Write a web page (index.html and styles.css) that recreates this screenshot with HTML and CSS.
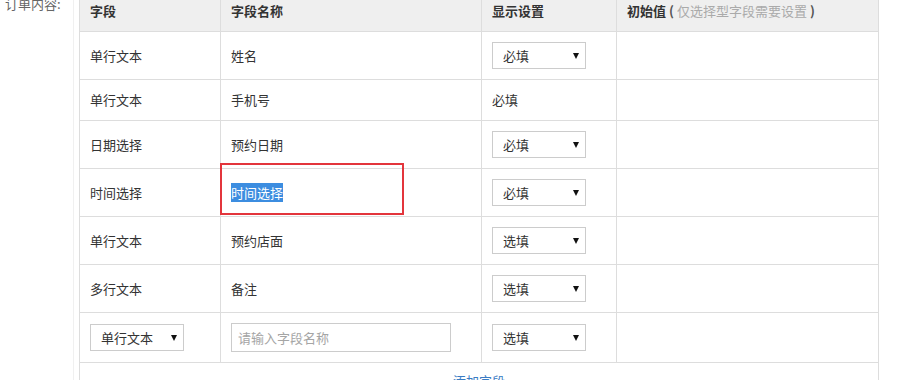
FILE: index.html
```html
<!DOCTYPE html>
<html lang="zh-CN">
<head>
<meta charset="utf-8">
<title>订单内容</title>
<link rel="stylesheet" href="styles.css">
</head>
<body>
<div class="form-row">
  <div class="form-label">订单内容:</div>
  <div class="form-field">
    <table class="field-table">
      <colgroup>
        <col class="c1"><col class="c2"><col class="c3"><col class="c4">
      </colgroup>
      <thead>
        <tr>
          <th>字段</th>
          <th>字段名称</th>
          <th>显示设置</th>
          <th>初始值<span class="paren">(</span><span class="hint">仅选择型字段需要设置</span><span class="paren">)</span></th>
        </tr>
      </thead>
      <tbody>
        <tr>
          <td>单行文本</td>
          <td>姓名</td>
          <td><span class="sel"><select><option>必填</option><option>选填</option></select><span class="arrow"></span></span></td>
          <td></td>
        </tr>
        <tr>
          <td>单行文本</td>
          <td>手机号</td>
          <td>必填</td>
          <td></td>
        </tr>
        <tr>
          <td>日期选择</td>
          <td>预约日期</td>
          <td><span class="sel"><select><option>必填</option><option>选填</option></select><span class="arrow"></span></span></td>
          <td></td>
        </tr>
        <tr>
          <td>时间选择</td>
          <td class="marked"><span class="picked">时间选择</span><span class="red-box"></span></td>
          <td><span class="sel"><select><option>必填</option><option>选填</option></select><span class="arrow"></span></span></td>
          <td></td>
        </tr>
        <tr>
          <td>单行文本</td>
          <td>预约店面</td>
          <td><span class="sel"><select><option>选填</option><option>必填</option></select><span class="arrow"></span></span></td>
          <td></td>
        </tr>
        <tr>
          <td>多行文本</td>
          <td>备注</td>
          <td><span class="sel"><select><option>选填</option><option>必填</option></select><span class="arrow"></span></span></td>
          <td></td>
        </tr>
        <tr>
          <td><span class="sel"><select><option>单行文本</option><option>多行文本</option><option>日期选择</option><option>时间选择</option></select><span class="arrow"></span></span></td>
          <td><input class="name-input" type="text" placeholder="请输入字段名称"></td>
          <td><span class="sel"><select><option>选填</option><option>必填</option></select><span class="arrow"></span></span></td>
          <td></td>
        </tr>
        <tr class="add-row">
          <td colspan="4"><a class="add-link" href="#">添加字段</a></td>
        </tr>
      </tbody>
    </table>
  </div>
</div>
</body>
</html>
```

FILE: styles.css
```css
html, body {
  margin: 0;
  padding: 0;
  background: #fff;
}

body {
  font-family: "Microsoft YaHei", "Noto Sans CJK SC", "Noto Sans", sans-serif;
  font-size: 13px;
  color: #333;
  overflow: hidden;
}

.form-row {
  display: flex;
  align-items: flex-start;
  margin-top: -10px;
}

.form-label {
  width: 68px;
  padding-left: 5px;
  padding-top: 4px;
  line-height: 20px;
  color: #666;
  white-space: nowrap;
}

.form-field {
  border-left: 1px solid #f0f0f0;
  padding-left: 5px;
  min-height: 420px;
}

.field-table {
  border-collapse: collapse;
  table-layout: fixed;
  width: 799px;
}

.c1 { width: 141px; }
.c2 { width: 261px; }
.c3 { width: 135px; }
.c4 { width: 262px; }

.field-table th,
.field-table td {
  border: 1px solid #dddddd;
  padding: 10px;
  line-height: 20px;
  text-align: left;
  vertical-align: middle;
  white-space: nowrap;
}

.field-table th {
  background: #efefef;
  font-weight: bold;
  color: #333;
}

.paren {
  font-weight: bold;
  color: #555;
  margin: 0 3px;
}

.hint {
  font-weight: normal;
  color: #aaa;
}

.sel {
  position: relative;
  display: inline-block;
  vertical-align: top;
}

.sel select {
  appearance: none;
  -webkit-appearance: none;
  display: block;
  width: 94px;
  height: 27px;
  margin: 0;
  padding: 0 0 0 10px;
  border: 1px solid #cccccc;
  border-radius: 0;
  background: #fff;
  font-family: inherit;
  font-size: 13px;
  color: #333;
}

.sel .arrow {
  position: absolute;
  right: 7px;
  top: 11px;
  width: 0;
  height: 0;
  border-left: 3px solid transparent;
  border-right: 3px solid transparent;
  border-top: 6px solid #111;
  pointer-events: none;
}

.name-input {
  display: block;
  box-sizing: border-box;
  width: 220px;
  height: 29px;
  margin: 0;
  padding: 0 0 0 6px;
  border: 1px solid #cccccc;
  border-radius: 0;
  font-family: inherit;
  font-size: 13px;
  color: #333;
}

.name-input::placeholder {
  color: #a5a5a5;
}

.marked {
  position: relative;
}

.picked {
  background: #3c8de0;
  color: #fff;
}

.red-box {
  position: absolute;
  left: -1px;
  top: -6px;
  width: 180px;
  height: 48px;
  border: 2px solid #e3353c;
  pointer-events: none;
}

.add-row td {
  text-align: center;
  padding-top: 8px;
}

.add-link {
  color: #3a7cc4;
  text-decoration: none;
}
```
